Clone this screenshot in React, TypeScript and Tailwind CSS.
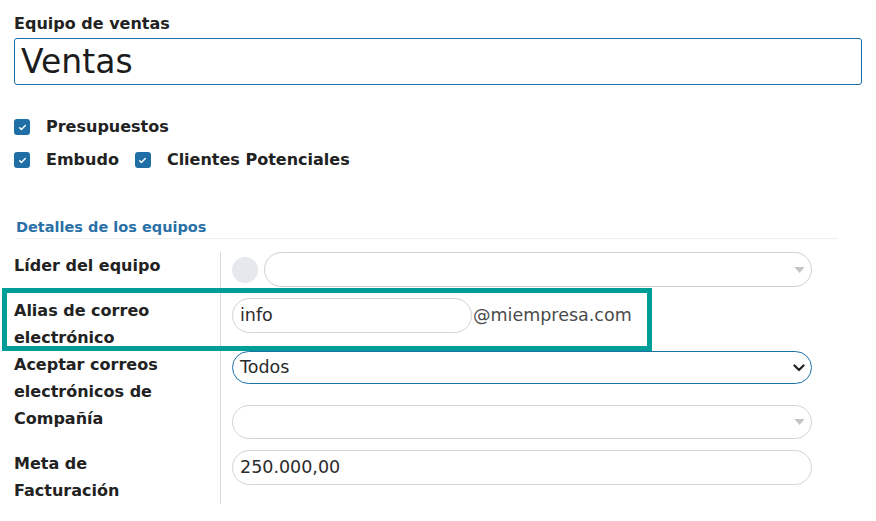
import type { ReactNode } from "react";

const font = { fontFamily: "'DejaVu Sans', 'Noto Sans', sans-serif" };

function Check() {
  return (
    <span className="flex h-4 w-4 shrink-0 items-center justify-center rounded-[3px] bg-[#1f6fa6]">
      <svg viewBox="0 0 16 16" className="h-[9px] w-[9px]" fill="none">
        <path d="M3 8.5l3 3 7-7" stroke="white" strokeWidth="2.6" strokeLinecap="round" strokeLinejoin="round" />
      </svg>
    </span>
  );
}

function GrayCaret() {
  return (
    <svg viewBox="0 0 10 6" className="h-[6px] w-[11px]">
      <path d="M0 0h10L5 6z" fill="#c4c4c4" />
    </svg>
  );
}

function Row({ label, children, pad }: { label: ReactNode; children: ReactNode; pad: string }) {
  return (
    <>
      <div className={`w-[206px] text-[16px] font-semibold leading-[27px] text-[#222] ${pad}`}>{label}</div>
      <div className={`border-l border-[#d9d9d9] pl-[11px] ${pad}`}>{children}</div>
    </>
  );
}

export default function App() {
  return (
    <div className="relative h-[521px] w-[876px] bg-white px-[14px] pt-[12px]" style={font}>
      <div className="text-[16px] font-semibold leading-6 text-[#222]">Equipo de ventas</div>
      <div className="mt-[2px] flex h-[47px] w-[848px] items-center rounded-[3px] border border-[#1d6fa8] px-[6px] text-[33px] leading-none text-[#1c1c1c]">
        Ventas
      </div>

      <div className="mt-[30px] flex h-6 items-center gap-4">
        <Check />
        <span className="text-[16px] font-semibold text-[#222]">Presupuestos</span>
      </div>
      <div className="mt-[9px] flex h-6 items-center">
        <Check />
        <span className="ml-4 text-[16px] font-semibold text-[#222]">Embudo</span>
        <span className="ml-4">
          <Check />
        </span>
        <span className="ml-4 text-[16px] font-semibold text-[#222]">Clientes Potenciales</span>
      </div>

      <div className="mx-[2px] mt-[45px] w-[822px] border-b border-[#eeeeee] pb-[1px] text-[14.5px] font-semibold leading-5 text-[#2a70a6]">
        Detalles de los equipos
      </div>

      <div className="mt-[13px] grid grid-cols-[206px_1fr]">
        <Row label="Líder del equipo" pad="pb-[10px]">
          <div className="flex items-center gap-[6px]">
            <span className="h-[26px] w-[26px] shrink-0 rounded-full bg-[#e5e8ec]" />
            <div className="flex h-[35px] w-[548px] items-center justify-end rounded-full border border-[#cfcfcf] pr-[6px]">
              <GrayCaret />
            </div>
          </div>
        </Row>
        <Row label={<>Alias de correo<br />electrónico</>} pad="pb-0">
          <div className="mt-[1px] flex items-center">
            <div className="flex h-[35px] w-[240px] items-center rounded-full border border-[#d4d4d4] px-[7px] text-[17.5px] text-[#2b2b2b]">
              info
            </div>
            <span className="ml-[1px] text-[17.5px] text-[#4a4a4a]">@miempresa.com</span>
          </div>
        </Row>
        <Row label={<>Aceptar correos<br />electrónicos de</>} pad="pb-0">
          <div className="flex h-[33px] w-[580px] items-center justify-between rounded-full border border-[#1d6fa8] pl-[7px] pr-[6px] text-[17.5px] text-[#2b2b2b]">
            <span>Todos</span>
            <svg viewBox="0 0 12 8" className="h-[8px] w-[12px]" fill="none">
              <path d="M1.5 1.5L6 6l4.5-4.5" stroke="#222" strokeWidth="2.2" strokeLinecap="round" strokeLinejoin="round" />
            </svg>
          </div>
        </Row>
        <Row label="Compañía" pad="pb-[11px]">
          <div className="flex h-[34px] w-[580px] items-center justify-end rounded-full border border-[#d4d4d4] pr-[6px]">
            <GrayCaret />
          </div>
        </Row>
        <Row label={<>Meta de<br />Facturación</>} pad="pb-0">
          <div className="flex h-[35px] w-[580px] items-center rounded-full border border-[#d4d4d4] px-[7px] text-[17.5px] text-[#2b2b2b]">
            250.000,00
          </div>
        </Row>
      </div>

      <div className="pointer-events-none absolute left-[2px] top-[288px] h-[63px] w-[650px] border-[5px] border-[#009e96]" />
    </div>
  );
}
